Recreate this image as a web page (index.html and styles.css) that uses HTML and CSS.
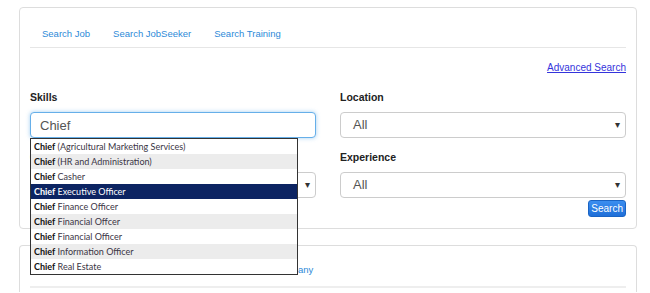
FILE: index.html
```html
<!DOCTYPE html>
<html lang="en">
<head>
    <meta charset="UTF-8">
    <meta name="viewport" content="width=device-width, initial-scale=1.0">
    <title>Search</title>
    <link rel="stylesheet" href="styles.css">
</head>
<body>
    <div class="page">
        <div class="card search-card">
            <ul class="tabs">
                <li><a href="#">Search Job</a></li>
                <li><a href="#">Search JobSeeker</a></li>
                <li><a href="#">Search Training</a></li>
            </ul>
            <div class="advanced">
                <a href="#">Advanced Search</a>
            </div>
            <div class="fields">
                <div class="field">
                    <label>Skills</label>
                    <div class="skills-wrap">
                        <input class="text-input" type="text" value="Chief">
                        <ul class="suggest">
                            <li><b>Chief</b> (Agricultural Marketing Services)</li>
                            <li><b>Chief</b> (HR and Administration)</li>
                            <li><b>Chief</b> Casher</li>
                            <li class="selected"><b>Chief</b> Executive Officer</li>
                            <li><b>Chief</b> Finance Officer</li>
                            <li><b>Chief</b> Financial Offcer</li>
                            <li><b>Chief</b> Financial Officer</li>
                            <li><b>Chief</b> Information Officer</li>
                            <li><b>Chief</b> Real Estate</li>
                        </ul>
                    </div>
                </div>
                <div class="field">
                    <label>Location</label>
                    <div class="select">All</div>
                </div>
                <div class="field">
                    <label>Category</label>
                    <div class="select">All</div>
                </div>
                <div class="field">
                    <label>Experience</label>
                    <div class="select">All</div>
                </div>
            </div>
            <div class="actions">
                <button class="btn-search">Search</button>
            </div>
        </div>

        <div class="card list-card">
            <ul class="links">
                <li><a href="#">Jobs by Category</a></li>
                <li><a href="#">Jobs by Location</a></li>
                <li><a href="#">Jobs by Company</a></li>
            </ul>
        </div>
    </div>
</body>
</html>
```

FILE: styles.css
```css
body {
    margin: 0;
    background-color: #fff;
    font-family: "Liberation Sans", Arial, sans-serif;
    color: #222;
}

.page {
    padding: 7px 13px 0 19px;
}

.card {
    border: 1px solid #ddd;
    border-radius: 4px;
    padding: 0 10px;
}

.search-card {
    padding-bottom: 11px;
}

.tabs {
    list-style: none;
    margin: 0;
    padding: 19px 0 6px;
    display: flex;
    border-bottom: 1px solid #e6e6e6;
}

.tabs li a,
.links li a {
    display: block;
    padding: 0 12px;
    font-size: 9.5px;
    line-height: 14px;
    color: #2e8ad8;
    text-decoration: none;
}

.tabs li + li a {
    padding-left: 11px;
}

.advanced {
    margin-top: 12px;
    text-align: right;
    line-height: 12px;
}

.advanced a {
    font-size: 10px;
    color: #3434dc;
    text-decoration: underline;
}

.fields {
    display: grid;
    grid-template-columns: 1fr 1fr;
    column-gap: 24px;
    row-gap: 12px;
    margin-top: 16px;
}

.field label {
    display: block;
    font-size: 10.5px;
    font-weight: bold;
    line-height: 14px;
    margin-bottom: 8px;
    color: #222;
}

.skills-wrap {
    position: relative;
}

.text-input {
    display: block;
    box-sizing: border-box;
    width: 100%;
    height: 26px;
    margin: 0;
    padding: 0 9px;
    border: 1px solid #66afe9;
    border-radius: 4px;
    box-shadow: 0 0 4px rgba(102, 175, 233, 0.6);
    font-family: "Liberation Sans", Arial, sans-serif;
    font-size: 13px;
    color: #555;
    outline: none;
}

.select {
    box-sizing: border-box;
    height: 26px;
    padding: 0 12px;
    border: 1px solid #ccc;
    border-radius: 4px;
    font-size: 13px;
    line-height: 24px;
    color: #555;
    position: relative;
}

.select::after {
    content: "\25BE";
    position: absolute;
    right: 5px;
    top: 0;
    font-size: 10px;
    color: #333;
}

.suggest {
    position: absolute;
    top: 26px;
    left: 0;
    width: 268px;
    box-sizing: border-box;
    margin: 0;
    padding: 0;
    list-style: none;
    background: #fff;
    border: 1px solid #333;
    z-index: 10;
    font-family: Lato, "Noto Sans", sans-serif;
    font-size: 9px;
    color: #3b3545;
}

.suggest li {
    height: 15px;
    line-height: 15px;
    padding: 0 3px;
    white-space: nowrap;
}

.suggest li:nth-child(even) {
    background: #ececec;
}

.suggest li b {
    color: #111;
}

.suggest li.selected {
    background: #0c2462;
    color: #fff;
}

.suggest li.selected b {
    color: #fff;
}

.actions {
    display: flex;
    justify-content: flex-end;
    margin-top: 2px;
}

.btn-search {
    height: 17px;
    padding: 0 2px;
    border: 1px solid #1a64c4;
    border-radius: 3px;
    background: linear-gradient(#3b8ef0, #1f6fd8);
    color: #fff;
    font-family: "Liberation Sans", Arial, sans-serif;
    font-size: 10px;
    line-height: 15px;
}

.list-card {
    margin-top: 16px;
    height: 46px;
    border-bottom: none;
    border-radius: 4px 4px 0 0;
}

.links {
    list-style: none;
    margin: 0;
    padding: 17px 0 9px;
    display: flex;
    border-bottom: 2px solid #eee;
}

.links li + li a {
    padding-left: 13px;
}
```
